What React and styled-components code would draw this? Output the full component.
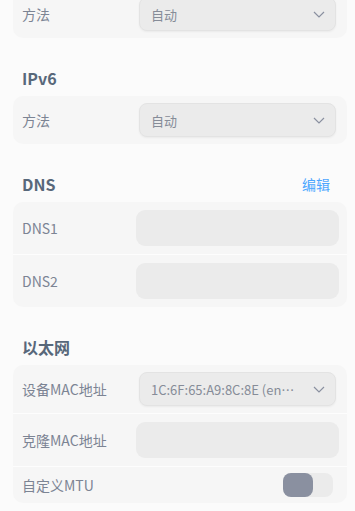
import React from 'react'
import styled, { createGlobalStyle } from 'styled-components'

const Global = createGlobalStyle`
    html, body {
        margin: 0;
        padding: 0;
        background: #fbfbfb;
    }
    body {
        font-family: "Noto Sans CJK SC", "Noto Sans", sans-serif;
        overflow: hidden;
    }
`

const Page = styled.main`
    width: 355px;
    height: 511px;
    padding: 0 8px 0 13px;
    box-sizing: border-box;
    overflow: hidden;
`

const Card = styled.section`
    background: #f6f6f6;
    border-radius: 10px;
    overflow: hidden;
    margin-top: ${p => p.$first ? '-10px' : '0'};
`

const Header = styled.div`
    display: flex;
    align-items: center;
    justify-content: space-between;
    height: 22px;
    margin: 29px 0 7px;
    padding: 0 17px 0 9px;
`

const Title = styled.h2`
    margin: 0;
    font-size: 16px;
    font-weight: 700;
    color: #58687a;
`

const EditLink = styled.a`
    font-size: 14px;
    color: #4da6ff;
    cursor: pointer;
`

const Row = styled.div`
    display: flex;
    align-items: center;
    height: ${p => p.$h}px;
    padding: 0 8px 0 9px;
    & + & {
        border-top: 1px solid #fdfdfd;
    }
`

const Label = styled.span`
    width: 114px;
    flex: none;
    font-size: 14px;
    color: #7c8494;
    white-space: nowrap;
`

const Select = styled.div`
    flex: 1;
    min-width: 0;
    margin: 0 3px;
    height: 34px;
    box-sizing: border-box;
    display: flex;
    align-items: center;
    padding: 0 10px 0 11px;
    background: #ebebeb;
    border: 1px solid #e3e3e3;
    border-radius: 8px;
    box-shadow: 0 1px 2px rgba(0, 0, 0, 0.05);
`

const SelectText = styled.span`
    flex: 1;
    min-width: 0;
    font-size: 13px;
    color: #868c98;
    white-space: nowrap;
    overflow: hidden;
    text-overflow: ellipsis;
    padding-right: 16px;
`

const Input = styled.div`
    flex: 1;
    height: 36px;
    background: #ebebeb;
    border-radius: 9px;
`

const Toggle = styled.div`
    margin-left: auto;
    margin-right: 6px;
    width: 50px;
    height: 24px;
    border-radius: 8px;
    background: #ebebeb;
    display: flex;
`

const Knob = styled.div`
    width: 30px;
    height: 24px;
    border-radius: 8px;
    background: #8a90a0;
`

const Chevron = () => (
    <svg width="12" height="7" viewBox="0 0 12 7" fill="none">
        <path d="M1 1l5 5 5-5" stroke="#8a90a0" strokeWidth="1.2" />
    </svg>
)

const Dropdown = ({ value }) => (
    <Select>
        <SelectText>{value}</SelectText>
        <Chevron />
    </Select>
)

export default function App () {
    return (
        <Page>
            <Global />
            <Card $first>
                <Row $h={48}>
                    <Label>方法</Label>
                    <Dropdown value="自动" />
                </Row>
            </Card>

            <Header><Title>IPv6</Title></Header>
            <Card>
                <Row $h={48}>
                    <Label>方法</Label>
                    <Dropdown value="自动" />
                </Row>
            </Card>

            <Header>
                <Title>DNS</Title>
                <EditLink>编辑</EditLink>
            </Header>
            <Card>
                <Row $h={52}>
                    <Label>DNS1</Label>
                    <Input />
                </Row>
                <Row $h={52}>
                    <Label>DNS2</Label>
                    <Input />
                </Row>
            </Card>

            <Header><Title>以太网</Title></Header>
            <Card>
                <Row $h={48}>
                    <Label>设备MAC地址</Label>
                    <Dropdown value="1C:6F:65:A9:8C:8E (enp2s0)" />
                </Row>
                <Row $h={52}>
                    <Label>克隆MAC地址</Label>
                    <Input />
                </Row>
                <Row $h={36}>
                    <Label>自定义MTU</Label>
                    <Toggle><Knob /></Toggle>
                </Row>
            </Card>
        </Page>
    )
}
